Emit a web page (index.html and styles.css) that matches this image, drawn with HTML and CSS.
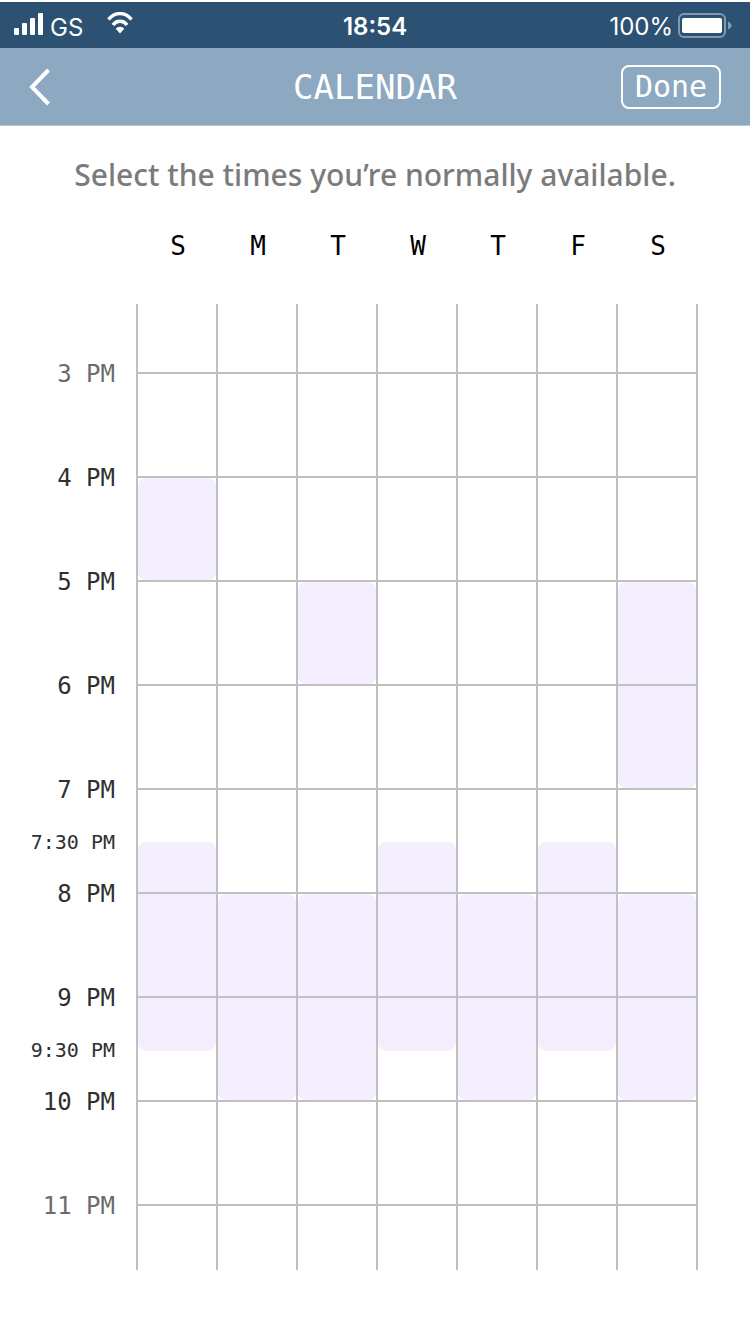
FILE: index.html
```html
<!DOCTYPE html>
<html lang="en">
<head>
<meta charset="utf-8">
<meta name="viewport" content="width=device-width, initial-scale=1">
<title>Calendar</title>
<link rel="stylesheet" href="styles.css">
</head>
<body>
<div class="status-bar">
  <div class="status-side">
    <svg class="signal" width="30" height="24" viewBox="0 0 30 24" fill="#fff" aria-hidden="true">
      <rect x="0" y="16" width="5" height="7" rx="1"/><rect x="8" y="11" width="5" height="12" rx="1"/><rect x="16" y="6" width="5" height="17" rx="1"/><rect x="24" y="1" width="5" height="22" rx="1"/>
    </svg>
    <span class="carrier">GS</span>
    <svg class="wifi" width="26" height="22" viewBox="0 0 26 22" aria-hidden="true">
      <path d="M1.500 7.500C8-.5 18-.5 24.500 7.500M6 13C9.500 8 16.500 8 20 13" fill="none" stroke="#fff" stroke-width="3.400"/>
      <path d="M8.800 16.800C10.500 14 15.500 14 17.200 16.800L13 21.500Z" fill="#fff"/>
    </svg>
  </div>
  <time class="clock">18:54</time>
  <div class="status-side status-right">
    <span class="charge">100%</span>
    <svg class="battery" width="54" height="26" viewBox="0 0 54 26" aria-hidden="true">
      <rect x="1" y="1" width="46" height="23" rx="5" fill="none" stroke="#8499ae" stroke-width="2"/>
      <rect x="4" y="5" width="40" height="15" rx="2" fill="#fff"/>
      <path d="M50 8.500Q53.500 10 53.500 12.500T50 16.500Z" fill="#8499ae"/>
    </svg>
  </div>
</div>
<header class="nav-bar">
  <button class="back" type="button" aria-label="Back">
    <svg width="22" height="38" viewBox="0 0 22 38" fill="none" stroke="#fff" stroke-width="4" aria-hidden="true"><path d="M19.500 2L3 19L19.500 36"/></svg>
  </button>
  <h1 class="title">CALENDAR</h1>
  <button class="done" type="button">Done</button>
</header>
<main>
  <p class="prompt">Select the times you’re normally available.</p>
  <div class="days">
    <span>S</span><span>M</span><span>T</span><span>W</span><span>T</span><span>F</span><span>S</span>
  </div>
  <div class="schedule">
    <div class="block d1 from-400 to-500"></div>
    <div class="block d3 from-500 to-600"></div>
    <div class="block d7 from-500 to-700"></div>
    <div class="block d1 from-730 to-930"></div>
    <div class="block d2 from-800 to-1000"></div>
    <div class="block d3 from-800 to-1000"></div>
    <div class="block d4 from-730 to-930"></div>
    <div class="block d5 from-800 to-1000"></div>
    <div class="block d6 from-730 to-930"></div>
    <div class="block d7 from-800 to-1000"></div>

    <div class="line from-300"></div>
    <div class="line from-400"></div>
    <div class="line from-500"></div>
    <div class="line from-600"></div>
    <div class="line from-700"></div>
    <div class="line from-800"></div>
    <div class="line from-900"></div>
    <div class="line from-1000"></div>
    <div class="line from-1100"></div>

    <div class="column d1"></div>
    <div class="column d2"></div>
    <div class="column d3"></div>
    <div class="column d4"></div>
    <div class="column d5"></div>
    <div class="column d6"></div>
    <div class="column d7 last"></div>

    <span class="hour muted from-300">3 PM</span>
    <span class="hour from-400">4 PM</span>
    <span class="hour from-500">5 PM</span>
    <span class="hour from-600">6 PM</span>
    <span class="hour from-700">7 PM</span>
    <span class="hour half from-730">7:30 PM</span>
    <span class="hour from-800">8 PM</span>
    <span class="hour from-900">9 PM</span>
    <span class="hour half from-930">9:30 PM</span>
    <span class="hour from-1000">10 PM</span>
    <span class="hour muted from-1100">11 PM</span>
  </div>
</main>
</body>
</html>
```
FILE: styles.css
```css
* { box-sizing: border-box; }

body {
  margin: 0;
  padding-top: 2px;
  background: #fff;
  font-family: "DejaVu Sans Mono", monospace;
}

button {
  padding: 0;
  background: none;
  border: 0;
  color: inherit;
  font: inherit;
}

/* Status bar */
.status-bar {
  display: grid;
  grid-template-columns: 1fr auto 1fr;
  align-items: center;
  height: 46px;
  padding: 2px 14px 0 14px;
  background: #2c5172;
  color: #fff;
  font-family: Inter, sans-serif;
  font-size: 24px;
}
.status-side { display: flex; align-items: center; }
.status-right { justify-content: flex-end; gap: 5px; }
.signal { margin-bottom: 4px; }
.carrier { margin: 2px 24px 0 6px; }
.wifi { margin-bottom: 6px; }
.battery { margin-right: 4px; }
.clock { font-weight: 600; }

/* Navigation bar */
.nav-bar {
  display: grid;
  grid-template-columns: 1fr auto 1fr;
  align-items: center;
  height: 78px;
  padding: 0 29px;
  border-bottom: 1px solid #b5c7d8;
  background: #8da8c1;
  color: #fff;
}
.back { display: flex; }
.title {
  margin: 0;
  font-size: 34px;
  font-weight: 400;
}
.done {
  justify-self: end;
  width: 100px;
  height: 44px;
  border: 2px solid #fff;
  border-radius: 8px;
  font-size: 30px;
  line-height: 36px;
}

/* Heading */
.prompt {
  margin: 26px 0 0;
  color: #7b7b7b;
  font-family: "Noto Sans", sans-serif;
  font-size: 30px;
  font-weight: 500;
  line-height: 46px;
  text-align: center;
}
.days {
  display: grid;
  grid-template-columns: repeat(7, 1fr);
  margin-top: 28px;
  padding: 0 52px 0 138px;
  color: #000;
  font-size: 26px;
  line-height: 40px;
  text-align: center;
}

/* Schedule: one grid row per half hour from 3 PM */
.schedule {
  display: grid;
  grid-template-columns: 136px repeat(7, 1fr);
  grid-template-rows: 68px repeat(16, 52px) 66px;
  margin-top: 38px;
  padding-right: 54px;
}
.from-300 { grid-row-start: 2; }
.from-400 { grid-row-start: 4; }
.from-500 { grid-row-start: 6; }
.from-600 { grid-row-start: 8; }
.from-700 { grid-row-start: 10; }
.from-730 { grid-row-start: 11; }
.from-800 { grid-row-start: 12; }
.from-900 { grid-row-start: 14; }
.from-930 { grid-row-start: 15; }
.from-1000 { grid-row-start: 16; }
.from-1100 { grid-row-start: 18; }
.to-500 { grid-row-end: 6; }
.to-600 { grid-row-end: 8; }
.to-700 { grid-row-end: 10; }
.to-930 { grid-row-end: 15; }
.to-1000 { grid-row-end: 16; }
.d1 { grid-column: 2; }
.d2 { grid-column: 3; }
.d3 { grid-column: 4; }
.d4 { grid-column: 5; }
.d5 { grid-column: 6; }
.d6 { grid-column: 7; }
.d7 { grid-column: 8; }

.block {
  margin: 2px 0 0 2px;
  border-radius: 8px;
  background: #f5eefe;
}
.block.to-930 { margin-bottom: -3px; }
.line {
  grid-column: 2 / -1;
  height: 2px;
  background: #c0c0c0;
}
.column {
  grid-row: 1 / -1;
  border-left: 2px solid #c0c0c0;
}
.column.last {
  margin-right: -2px;
  border-right: 2px solid #c0c0c0;
}
.hour {
  grid-column: 1;
  height: 40px;
  margin-top: -18px;
  padding-right: 21px;
  color: #2f2f2f;
  font-size: 24px;
  line-height: 40px;
  text-align: right;
}
.hour.half { font-size: 20px; }
.hour.muted { color: #6b6b6b; }
```
